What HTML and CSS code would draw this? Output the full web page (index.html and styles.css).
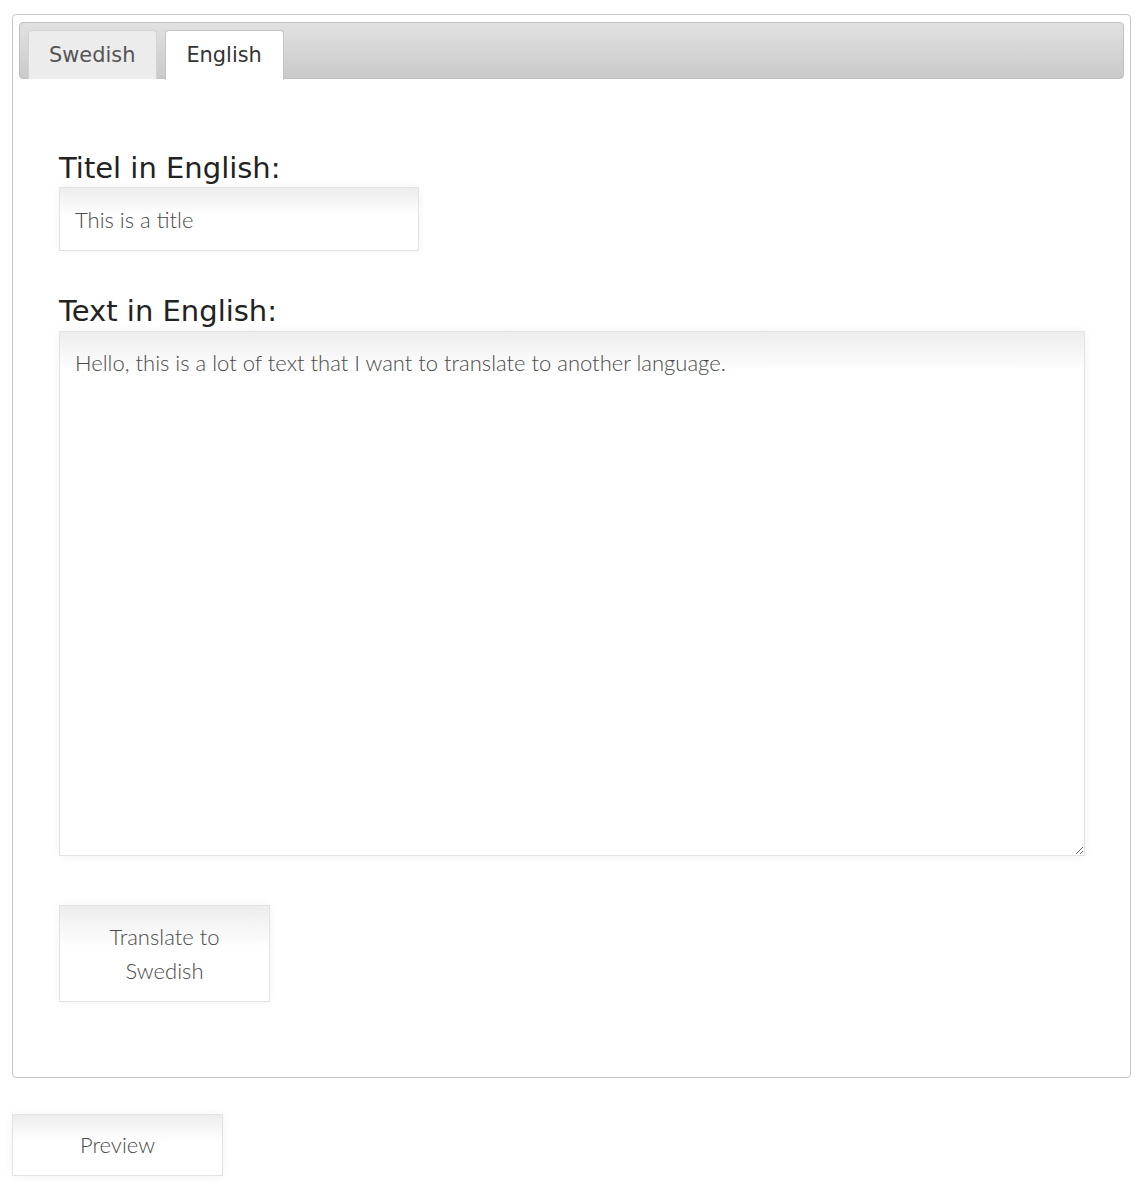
FILE: index.html
```html
<!DOCTYPE html>
<html>
<head>
<meta charset="utf-8">
<link rel="stylesheet" href="styles.css">
</head>
<body>
<div class="tabs">
  <ul class="tab-nav">
    <li class="tab">Swedish</li>
    <li class="tab active">English</li>
  </ul>
  <div class="panel">
    <label class="field-label">Titel in English:</label>
    <input class="title-input" type="text" value="This is a title">
    <label class="field-label second">Text in English:</label>
    <textarea class="text-input">Hello, this is a lot of text that I want to translate to another language.</textarea>
    <button class="btn translate">Translate to<br>Swedish</button>
  </div>
</div>
<button class="btn preview">Preview</button>
</body>
</html>
```
FILE: styles.css
```css
html, body { margin: 0; padding: 0; background: #fff; }
body {
  padding: 14px 13px 10px 12px;
  font-family: "DejaVu Sans", Verdana, sans-serif;
}
.tabs {
  border: 1px solid #c5c5c5;
  border-radius: 4px;
  padding: 7px 6px 0 6px;
  height: 1064px;
  box-sizing: border-box;
}
.tab-nav {
  list-style: none;
  margin: 0;
  padding: 7px 8px 0 8px;
  height: 57px;
  box-sizing: border-box;
  display: flex;
  gap: 8px;
  border: 1px solid #c0c0c0;
  border-radius: 4px;
  background: linear-gradient(#e1e1e1, #cacaca);
}
.tab {
  height: 49px;
  box-sizing: border-box;
  padding: 12px 21px 0 20px;
  font-size: 20.9px;
  color: #555;
  background: #ececec;
  border: 1px solid #d3d3d3;
  border-bottom: none;
  border-radius: 4px 4px 0 0;
}
.tab.active {
  background: #fff;
  color: #333;
  height: 50px;
  border-color: #c5c5c5;
}
.panel {
  padding: 72px 39px 0 40px;
  display: flex;
  flex-direction: column;
  align-items: flex-start;
}
.field-label {
  font-size: 29px;
  color: #222;
  line-height: 34px;
  margin-left: 0;
}
.field-label.second { margin-top: 43px; }
.title-input, .text-input, .btn {
  font-family: "Lato", "Source Sans Pro", sans-serif;
  font-weight: 300;
  font-size: 22px;
  color: #4a4a4a;
  border: 1px solid #e3e3e3;
  background: linear-gradient(#ededed, #fff 45%);
  box-shadow: 0 0 10px rgba(0,0,0,0.05);
  outline: none;
  box-sizing: border-box;
  margin: 0;
}
.title-input {
  margin-top: 2px;
  width: 360px;
  height: 64px;
  padding: 0 15px;
}
.text-input {
  margin-top: 3px;
  width: 1026px;
  height: 525px;
  padding: 16px 15px;
  line-height: 30px;
  resize: vertical;
  background: linear-gradient(#ededed, #fff 40px);
}
.btn {
  width: 211px;
  text-align: center;
  line-height: 34px;
}
.translate {
  margin-top: 49px;
  height: 97px;
  padding: 14px 10px;
}
.preview {
  margin-top: 36px;
  height: 62px;
  display: block;
}
```
